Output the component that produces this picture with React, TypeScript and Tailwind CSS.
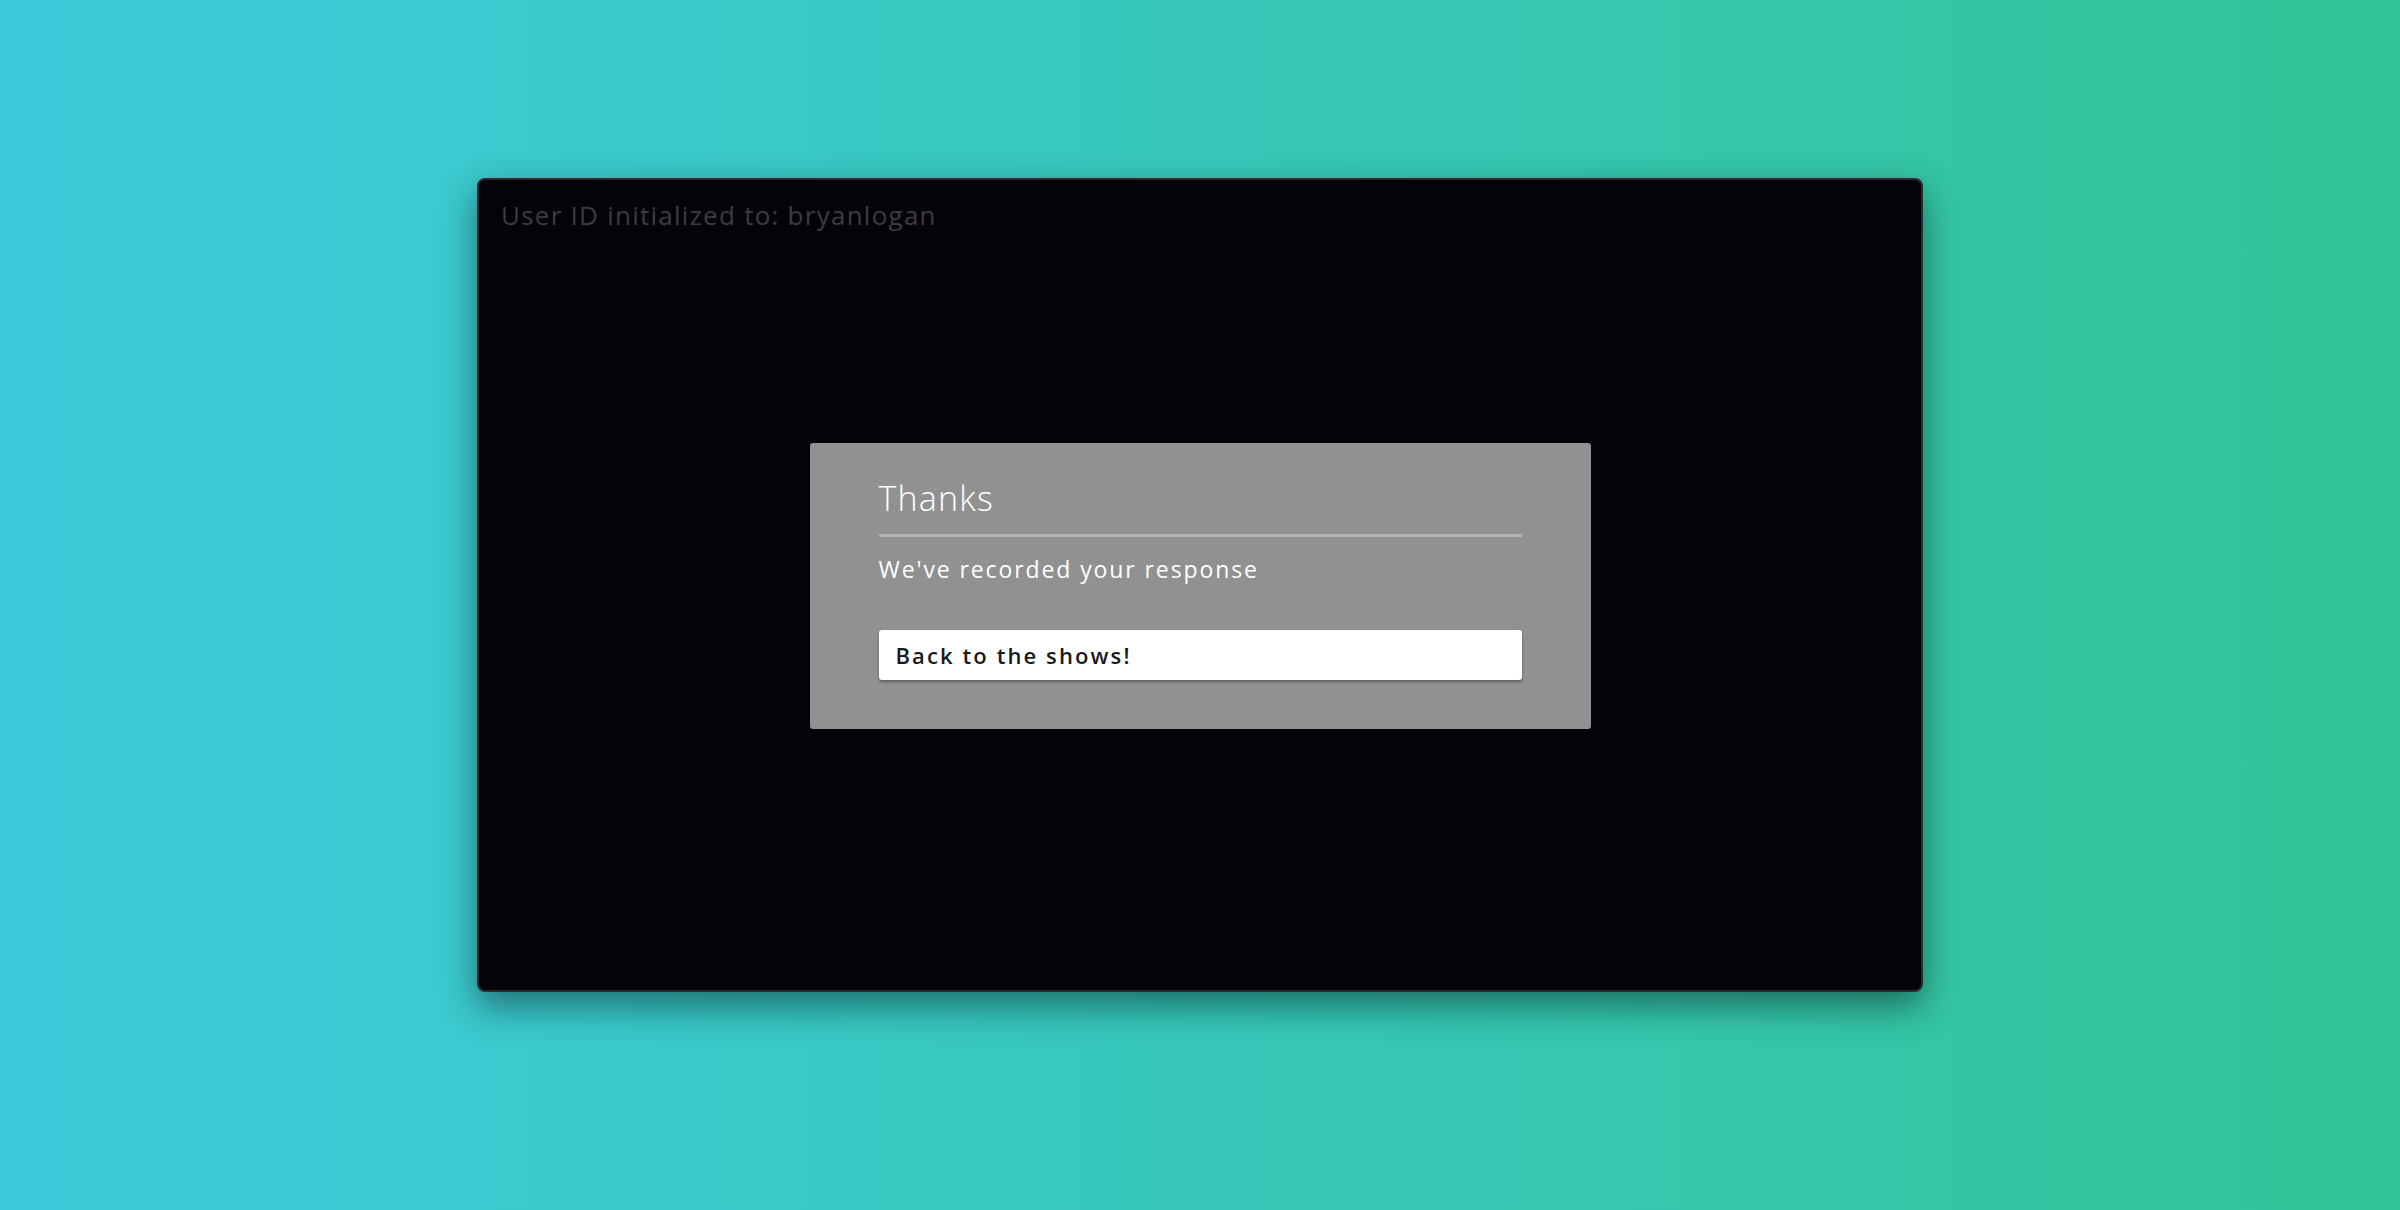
import React from "react";

export default function App() {
  return (
    <div
      className="w-full h-[1210px] bg-gradient-to-r from-[#3dcbdc] to-[#33c497] flex justify-center pt-[178px]"
      style={{ fontFamily: "'Open Sans', Lato, sans-serif" }}
    >
      <div className="w-[1446px] h-[814px] rounded-[8px] border-2 border-[#2c2c30] bg-[#04030a] shadow-[0_14px_36px_rgba(0,0,0,0.45)] flex flex-col">
        <div className="pt-[22px] pl-[22px] text-[26px] leading-[26px] text-[#3c3c41] tracking-[1.25px]">
          User ID initialized to: bryanlogan
        </div>
        <div className="flex-1 flex items-center justify-center -mt-[46px]">
          <div className="w-[781px] rounded-[3px] bg-[#919191] pt-[38px] pb-[49px] px-[69px] flex flex-col">
            <div className="text-[34px] leading-[34px] font-light text-white tracking-[1.2px]">Thanks</div>
            <div className="mt-[19px] h-[3px] bg-[#b4b4b4]" />
            <div className="mt-[21px] text-[23px] leading-[23px] text-white tracking-[1.9px]">
              We've recorded your response
            </div>
            <button className="mt-[49px] h-[50px] rounded-[3px] bg-white text-left px-[17px] text-[22px] leading-[22px] font-semibold text-[#1a1a1a] tracking-[2.1px] shadow-[0_2px_3px_rgba(0,0,0,0.35)]">
              Back to the shows!
            </button>
          </div>
        </div>
      </div>
    </div>
  );
}
